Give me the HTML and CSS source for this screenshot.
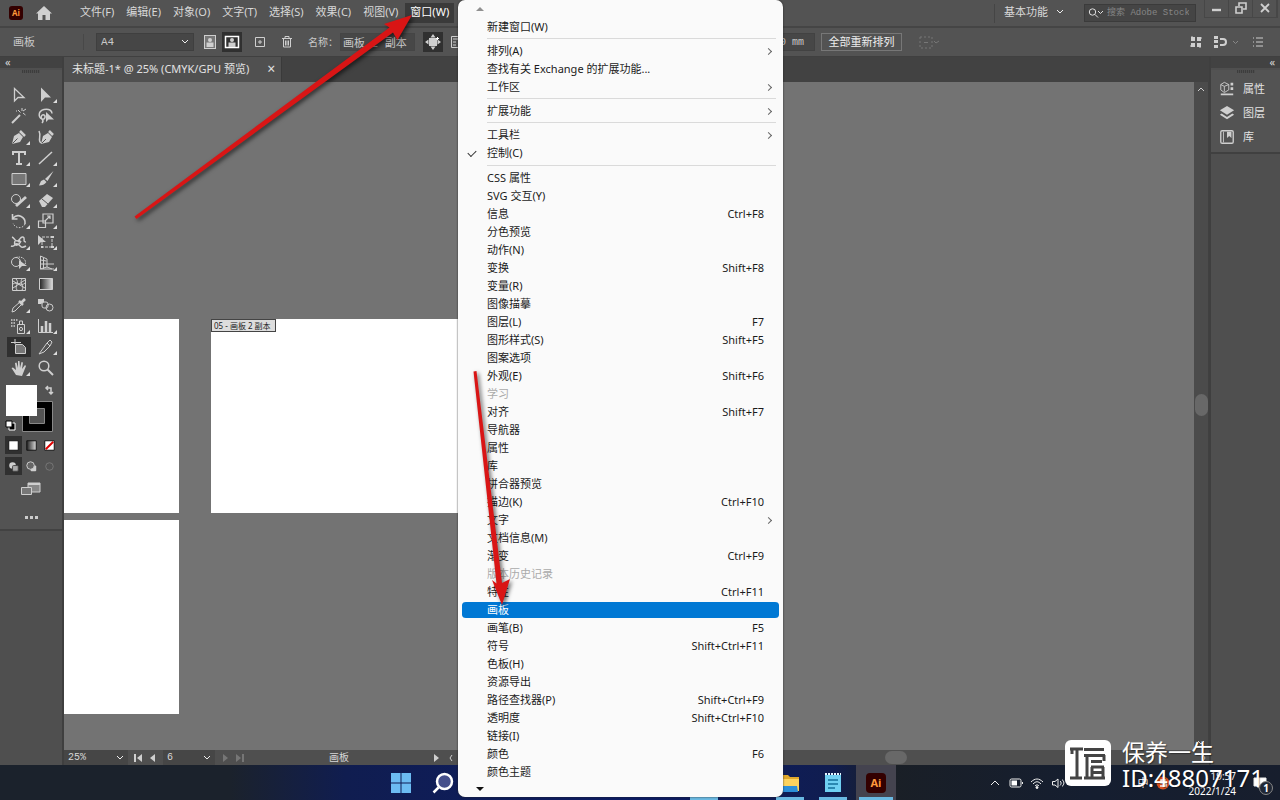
FILE: index.html
```html
<!DOCTYPE html>
<html lang="zh-CN">
<head>
<meta charset="utf-8">
<title>未标题-1* @ 25% (CMYK/GPU 预览)</title>
<link rel="stylesheet" href="styles.css">
</head>
<body>
<div class="app">
  <header class="menubar">
    <svg class="ai-logo" viewBox="0 0 14 14"><rect width="14" height="14" rx="3" fill="#300"/><text x="7" y="10" text-anchor="middle" class="ai-text">Ai</text></svg>
    <svg class="home" viewBox="0 0 18 16"><path d="M9 1 1 8.500h2V15h4.500v-5h3v5H15V8.500h2z" fill="#d0d0d0"/></svg>
    <nav class="menus">
      <button>文件(F)</button><button>编辑(E)</button><button>对象(O)</button><button>文字(T)</button><button>选择(S)</button><button>效果(C)</button><button>视图(V)</button><button class="open">窗口(W)</button>
    </nav>
    <div class="menubar-right">
      <button class="workspace">基本功能 <svg viewBox="0 0 8 6"><path d="m1 1 3 3 3-3"/></svg></button>
      <label class="search">
        <svg viewBox="0 0 16 12"><circle cx="4.500" cy="5" r="3.200"/><path d="m7 7.500 3 3M10 4l2.500 2.500L15 4"/></svg>
        <input type="text" placeholder="搜索 Adobe Stock" aria-label="搜索 Adobe Stock">
      </label>
      <div class="window-buttons">
        <button aria-label="最小化"><svg viewBox="0 0 12 12"><path d="M1 8h9" stroke-width="2.400"/></svg></button>
        <button aria-label="还原"><svg viewBox="0 0 12 12"><path d="M4 4V1h7v6H8M1 5h6v6H1z" stroke-width="1.600"/></svg></button>
        <button aria-label="关闭"><svg viewBox="0 0 12 12"><path d="m2 2 8 8M10 2l-8 8" stroke-width="1.800"/></svg></button>
      </div>
    </div>
  </header>

  <div class="controlbar">
    <div class="control-main">
      <span class="control-title">画板</span>
      <div class="pick preset"><select aria-label="预设"><option>A4</option></select><svg viewBox="0 0 8 6"><path d="m1 1 3 3 3-3"/></svg></div>
      <div class="orient">
        <button aria-label="纵向"><svg viewBox="0 0 18 18"><rect x="3.500" y="2.500" width="11" height="13" fill="#777"/><circle cx="9" cy="7" r="2" class="f"/><path d="M5.500 9.500h7V14h-7z" class="f"/></svg></button>
        <button class="on" aria-label="横向"><svg viewBox="0 0 18 18"><rect x="2.500" y="3.500" width="13" height="11" stroke-width="1.500"/><circle cx="9" cy="7" r="2" class="f"/><path d="M5.500 9.500h7V14h-7z" class="f"/></svg></button>
      </div>
      <button class="icon-button" aria-label="新建画板"><svg viewBox="0 0 18 18"><path d="M4.500 4.500h9v9h-9zM9 7v4M7 9h4"/></svg></button>
      <button class="icon-button trash" aria-label="删除画板"><svg viewBox="0 0 18 18"><path d="M4 5.500h10M7 5V3.500h4V5M5.500 6v8h7V6M7.500 7.500v5M9 7.500v5M10.500 7.500v5"/></svg></button>
      <label class="name-field">名称： <input type="text" value="画板 2 副本 2"></label>
      <button class="icon-button on" aria-label="移动画板内容"><svg viewBox="0 0 18 18"><path d="M5 5h8v8H5zM9 1l2.500 3.500h-5zM9 17l2.500-3.500h-5zM1 9l3.500-2.500v5zM17 9l-3.500-2.500v5z" class="f"/><path d="M13.500 4v3M12 5.500h3"/></svg></button>
      <button class="icon-button list-button" aria-label="画板选项"><svg viewBox="0 0 18 18"><path d="M3.500 3.500h11v11h-11zM5 6h8M5 9h3M5 12h3"/></svg></button>
    </div>
    <input class="unit" type="text" value="0 mm" aria-label="高度">
    <button class="rearrange">全部重新排列</button>
    <svg class="refpoint" viewBox="0 0 22 14"><path d="M2 2h12v11H2z" stroke-dasharray="2 2"/><path d="M6 7.500h4M16 6l2 2 3-2"/></svg>
    <div class="control-right">
      <svg viewBox="0 0 14 14"><path class="f" d="M2 2h4v4H2zM8 2h4v4H8zM2 8h4v4H2zM8 8h4v4H8z"/><path d="M3 1v2M11 11v2M1 11h2M11 3h2"/></svg>
      <svg class="snap" viewBox="0 0 28 14"><path class="f" d="M1 1h4v3H1zM1 5h4v3H1zM1 10h4v3H1z"/><path d="M7 4h3a3 3 0 0 1 0 6H7" stroke-width="2"/><path d="m20 6 2.500 2.500L25 6" stroke="#888"/></svg>
      <svg viewBox="0 0 14 14"><path d="M2 3h1M2 7h1M2 11h1M5 3h7M5 7h7M5 11h7"/></svg>
    </div>
  </div>

  <div class="workspace-row">
    <aside class="tools-dock">
      <div class="dock-head">«</div>
      <div class="tools">
        <div class="grip"></div>
        <div class="tool-grid">
          <button aria-label="选择"><svg viewBox="0 0 18 18"><path d="M4.500 2.500v12.500l3.500-3.500H14z" stroke-width="1.300"/></svg></button>
          <button class="more" aria-label="直接选择"><svg viewBox="0 0 18 18"><path class="f" d="M4 1.500V16l4-4.500h6z"/></svg></button>
          <button aria-label="魔棒"><svg viewBox="0 0 18 18"><path d="m2 16 8-8" stroke-width="2"/><path d="M12 1v3M10.500 5.500 8 3M13 6l2.500 2M13 4l3-2M6 4h1"/></svg></button>
          <button aria-label="套索"><svg viewBox="0 0 18 18"><path d="M5 12C1 10 1 4 7 2.500c5-1 8 1 8 4M5 12c3 1 4-3 2-4s-4 2-2 4 1 3 0 4" stroke-width="1.500"/><path class="f" d="M9 5v10l2.500-2.500H17z"/></svg></button>
          <button class="more" aria-label="钢笔"><svg viewBox="0 0 18 18"><path class="f" d="m2 16 2-8 5-3 4 4-3 5z"/><path d="m10 3 5 5" stroke-width="2.500"/><path d="m2.500 15.500 5-5" stroke="#535353"/></svg></button>
          <button aria-label="曲率"><svg viewBox="0 0 18 18"><path class="f" d="m4 16 2-8 5-3 4 4-3 5z"/><path d="m12 3 4 4" stroke-width="2.500"/><path d="m5 15 4-4" stroke="#535353"/><path d="M4 15C0 12 5 9 2 3" stroke-width="1.500"/></svg></button>
          <button class="more" aria-label="文字"><svg viewBox="0 0 18 18"><path d="M3 6V3h12v3M9 3v12M6 15h6" stroke-width="2"/></svg></button>
          <button class="more" aria-label="直线"><svg viewBox="0 0 18 18"><path d="M2 15 15 3" stroke-width="1.500"/></svg></button>
          <button class="more" aria-label="矩形"><svg viewBox="0 0 18 18"><path d="M2 3.500h14v11H2z" fill="#777"/></svg></button>
          <button class="more" aria-label="画笔"><svg viewBox="0 0 18 18"><path class="f" d="M16.500 1 8 9l2.500 2zM7 9.500 4 11l-2 4.500c3 0 6-1 7.500-3.500z"/></svg></button>
          <button class="more" aria-label="Shaper"><svg viewBox="0 0 18 18"><circle cx="6" cy="8" r="4.500"/><path d="m6 15 10-9" stroke-width="2.800"/></svg></button>
          <button class="more" aria-label="橡皮擦"><svg viewBox="0 0 18 18"><path class="f" d="m2 10 8-7 6 4-8 9H5z"/><path d="m5 8 6 5" stroke="#555"/></svg></button>
          <button class="more" aria-label="旋转"><svg viewBox="0 0 18 18"><path d="M3 6c5-5 13-1 12 6M2.500 2v5h5" stroke-width="1.600"/><path d="M15 12c-2 5-10 5-12-1" stroke-dasharray="1.500 1.500"/></svg></button>
          <button class="more" aria-label="缩放"><svg viewBox="0 0 18 18"><path d="M6 2h10v9H6zM1.500 9h7v6.500h-7zM8 9l5-5M10 4h3v3" stroke-width="1.200"/></svg></button>
          <button class="more" aria-label="宽度"><svg viewBox="0 0 18 18"><path d="M2 4c3 1 2 4 5 4s3-5 6-4-1 5 3 5M1 13c4 2 4-4 7-2s3 5 8 2M5 8c-2 5 3 6 6 0" stroke-width="1.500"/><circle cx="9" cy="8" r="1.500" class="f"/></svg></button>
          <button class="more" aria-label="自由变换"><svg viewBox="0 0 18 18"><path d="M5 4h10v10H5z" stroke-dasharray="3 1"/><path class="f" d="M1 2v10l3-3h5zM14 3h3v2h-3zM14 13h3v2h-3zM4 13h2v2H4z"/></svg></button>
          <button class="more" aria-label="形状生成器"><svg viewBox="0 0 18 18"><circle cx="6" cy="8" r="4.500"/><path d="M6 3.500c7-2 11 3 9 7" stroke-dasharray="1.500 1"/><path class="f" d="M9 6v9l3-3h5z"/></svg></button>
          <button class="more" aria-label="透视网格"><svg viewBox="0 0 18 18"><path d="M3.500 2v13H17M3.500 2 10 5v8M3.500 6l6 1M3.500 10H17M6.500 4v11M10 13l5 2M3 15l7-2"/></svg></button>
          <button aria-label="网格"><svg viewBox="0 0 18 18"><path d="M2.500 3.500h13v12h-13zM3 9c4-3 8 3 12-1M6 4c4 4-2 7 1 11M12 4c-3 4 3 7 0 11M3 6l12 7M3 13l12-8"/></svg></button>
          <button aria-label="渐变"><svg viewBox="0 0 18 18"><defs><linearGradient id="g"><stop stop-color="#222"/><stop offset="1" stop-color="#ddd"/></linearGradient></defs><path d="M2.500 3.500h13v11h-13z" fill="url(#g)"/></svg></button>
          <button class="more" aria-label="吸管"><svg viewBox="0 0 18 18"><path d="m2 16 1-4 7-6 2 2-7 7z"/><path d="m9 5 4 4M11 7l4-4" stroke-width="2.500"/></svg></button>
          <button aria-label="混合"><svg viewBox="0 0 18 18"><path class="f" d="M1 3h6v3L4 8H1z"/><rect x="5" y="6" width="6" height="6" rx="2"/><circle cx="12.500" cy="11.500" r="3.500"/></svg></button>
          <button class="more" aria-label="符号喷枪"><svg viewBox="0 0 18 18"><path d="M7.500 7.500h7v9h-7zM9.500 7V4h3v3"/><circle cx="11" cy="12" r="1.600"/><path d="M1 3h7M1 6h5M1 9h4" stroke-dasharray="1.500 1" stroke-width="1.500"/></svg></button>
          <button class="more" aria-label="图表"><svg viewBox="0 0 18 18"><path d="M1.500 2v13.500H16"/><path d="M5 15V9M9 15V4M13 15V6" stroke-width="2.500"/></svg></button>
          <button class="on" aria-label="画板工具"><svg viewBox="0 0 18 18"><path d="M5 1v5M1 4.500h10"/><path d="M5.500 6.500h7l3 3v6h-10z" fill="#777"/></svg></button>
          <button class="more" aria-label="切片"><svg viewBox="0 0 18 18"><path d="m2 16 8-11 3 3-6 6zM10 5l3-3 2 2-2 4"/></svg></button>
          <button class="more" aria-label="抓手"><svg viewBox="0 0 18 18"><path class="f" d="M6 16 1.500 9l1.500-.5 3 2.500-1-7 1.500-.5L8 9V2h1.500l.5 7 1.500-6 1.500.5-1 6.500 3-4 1 1-4 10z"/></svg></button>
          <button aria-label="缩放工具"><svg viewBox="0 0 18 18"><circle cx="7" cy="7" r="4.800" stroke-width="1.500"/><path d="m10.500 10.500 5.500 5.500" stroke-width="2"/></svg></button>
        </div>
        <svg class="swatches" viewBox="0 0 62 50"><path d="M29.500 23.500h16v16h-16z" stroke="#000" stroke-width="14"/><path d="M22.500 16.500h30v30h-30zM29.500 23.500h15v15h-15z" stroke="#888"/><path d="M30 24h14v14H30z" fill="#535353" stroke="none"/><rect x="6" y="0" width="31" height="31" fill="#fff" stroke="none"/><path d="M46 3h5v6M48 1l-2 2 2 2M49 7l2 2 2-2" stroke-width="1.500"/><path d="M9 38h6v7H9z" fill="#000" stroke="#fff"/><path d="M6 36h6v6H6z" fill="#fff" stroke="#000"/></svg>
        <div class="fill-modes">
          <button class="on" aria-label="颜色"><svg viewBox="0 0 18 18"><path d="M4 4h10v10H4z" fill="#fff" stroke="#111"/></svg></button>
          <button aria-label="渐变填充"><svg viewBox="0 0 18 18"><path d="M4 4h10v10H4z" fill="url(#g)" stroke="#111"/></svg></button>
          <button aria-label="无"><svg viewBox="0 0 18 18"><path d="M4 4h10v10H4z" fill="#fff" stroke="#111"/><path d="m5 13 8-8" stroke="#d00" stroke-width="2"/></svg></button>
        </div>
        <div class="fill-modes">
          <button class="on" aria-label="正常绘图"><svg viewBox="0 0 18 18"><circle cx="8" cy="8" r="3.500" class="f"/><rect x="8" y="8" width="6" height="6" rx="1" fill="#aaa" stroke="#444"/></svg></button>
          <button aria-label="背面绘图"><svg viewBox="0 0 18 18"><rect x="8" y="8" width="6" height="6" rx="1" class="f"/><circle cx="8" cy="8" r="4" fill="#666"/></svg></button>
          <button aria-label="内部绘图"><svg viewBox="0 0 18 18"><circle cx="9" cy="9" r="4" stroke="#777"/></svg></button>
        </div>
        <button class="screen-mode" aria-label="屏幕模式"><svg viewBox="0 0 22 16"><path d="M8 2h12v9H8z" fill="#888"/><path d="M8 2h12v2H8z" class="f"/><path d="M1.500 6.500h10v7h-10z" fill="#777"/></svg></button>
        <button class="dots" aria-label="编辑工具栏"><i></i><i></i><i></i></button>
      </div>
    </aside>

    <main class="document">
      <div class="tabs"><div class="tab">未标题-1* @ 25% (CMYK/GPU 预览)<button aria-label="关闭文档">×</button></div></div>
      <div class="canvas-row">
        <div class="canvas">
          <div class="artboard a1"></div>
          <div class="artboard a2"><span>05 - 画板 2 副本</span></div>
          <div class="artboard a3"></div>
        </div>
        <div class="vscroll"><svg viewBox="0 0 8 6"><path d="m1 5 3-3 3 3"/></svg><div class="vthumb"></div><svg viewBox="0 0 8 6"><path d="m1 1 3 3 3-3"/></svg></div>
      </div>
      <div class="status">
        <div class="pick zoom-level"><select aria-label="缩放级别"><option>25%</option></select><svg viewBox="0 0 8 6"><path d="m1 1 3 3 3-3"/></svg></div>
        <svg viewBox="0 0 10 10"><path class="f" d="M1 1h2v8H1zM9 1v8L4 5z"/></svg>
        <svg viewBox="0 0 10 10"><path class="f" d="M7 1v8L2 5z"/></svg>
        <div class="pick board-no"><select aria-label="画板编号"><option>6</option></select><svg viewBox="0 0 8 6"><path d="m1 1 3 3 3-3"/></svg></div>
        <svg class="off" viewBox="0 0 10 10"><path class="f" d="M3 1v8l5-4z"/></svg>
        <svg class="off" viewBox="0 0 10 10"><path class="f" d="M7 1h2v8H7zM1 1v8l5-4z"/></svg>
        <span class="status-text">画板</span>
        <svg viewBox="0 0 10 10"><path class="f" d="M3 1v8l5-4z"/></svg>
        <svg viewBox="0 0 10 10"><path d="M6 2 4 5l2 3"/></svg>
        <div class="hscroll"><div class="hthumb"></div></div>
        <svg viewBox="0 0 10 10"><path d="m4 2 2 3-2 3"/></svg>
      </div>
    </main>

    <aside class="panels">
      <div class="dock-head right">«</div>
      <div class="panel-list">
        <div class="grip"></div>
        <button><svg viewBox="0 0 18 18"><path d="M2 4l4-2.500L11 4v6l-5 3-4-3zM2 4l4 2 5-2M6 6v6"/><path class="f" d="M13 2h3v3h-3zM13 7h3v3h-3zM2 14h14v2H2z"/></svg>属性</button>
        <button><svg viewBox="0 0 18 18"><path class="f" d="m9 1 8 5-8 5-8-5zM1 11l2-1.500 6 4 6-4 2 1.500-8 5z"/></svg>图层</button>
        <button><svg viewBox="0 0 18 18"><rect x="2" y="2" width="14" height="14" rx="1.500" stroke-width="1.500"/><path d="M5 3v12"/><path class="f" d="M9 3h5v7l-2.500-2L9 10z"/></svg>库</button>
      </div>
    </aside>
  </div>

  <footer class="taskbar">
    <svg class="win" viewBox="0 0 20 20"><path fill="#6cbcf2" d="M0 0h9.500v9.500H0zM10.500 0H20v9.500h-9.500zM0 10.500h9.500V20H0zM10.500 10.500H20V20h-9.500z"/></svg>
    <svg class="find" viewBox="0 0 22 22"><path d="m1.500 20.500 5-5" stroke="#fff" stroke-width="2.500"/><circle cx="12.500" cy="9.500" r="7.500" fill="#46508c" stroke="#fff" stroke-width="2.500"/></svg>
    <div class="apps">
      <div class="app-slot"></div>
      <div class="app-slot idle"></div>
      <div class="app-slot"><svg viewBox="0 0 20 22"><path fill="#e0a82c" d="M1 3h7l2 2h9v14H1z"/><path fill="#fcd35e" d="M1 7h18v12H1z"/><path fill="#2c8fd8" d="M3 14h14l1 6H2z"/></svg></div>
      <div class="app-slot"><svg viewBox="0 0 20 22"><path fill="#6fd0f2" d="M2 3h16v17H2z"/><path d="M2 2h16" stroke="#e5f6ff" stroke-width="2" stroke-dasharray="2 1"/><path d="M5 8h10M5 12h10M5 16h7" stroke="#15709c" stroke-width="1.500"/></svg></div>
      <div class="app-slot current"><svg viewBox="0 0 20 20"><rect width="20" height="20" rx="4" fill="#300"/><text x="10" y="14" text-anchor="middle" class="ai-big">Ai</text></svg></div>
    </div>
    <div class="tray">
      <svg viewBox="0 0 14 14"><path d="m3 9 4-4 4 4"/></svg>
      <svg viewBox="0 0 14 14"><rect x="1" y="3" width="11" height="8" rx="1.500"/><path d="M2.500 4.500H8v5H2.500z" fill="#fff" stroke="none"/><path d="M13.500 6v2"/></svg>
      <svg viewBox="0 0 14 14"><path d="M1 6c4-4 8-4 12 0M3 8c3-3 5-3 8 0M5 10c1-1.500 3-1.500 4 0"/><circle cx="7" cy="11.500" r="1" fill="#fff"/></svg>
      <svg viewBox="0 0 14 14"><path d="M1.500 5.500h2.500L7 3v8.500L4 9H1.500zM9 5c1.500 1 1.500 3 0 4.500M11 3.500c2.500 2 2.500 5 0 7"/></svg>
      <span class="ime">中</span>
      <svg class="sogou" viewBox="0 0 14 14"><circle cx="7" cy="7" r="6.500" fill="#d9501e" stroke="none"/><path d="M10 4H5v3h5v3H4" stroke-width="1.500"/></svg>
      <div class="clock"><span>19:57</span><span>2022/1/24</span></div>
      <div class="notice"><svg viewBox="0 0 14 12"><path d="M1 1h12v8H8l-3 2V9H1z" fill="#fff"/></svg><b>1</b></div>
    </div>
  </footer>
</div>

<div class="dropdown" role="menu">
  <div class="scroll-up"><svg viewBox="0 0 8 6"><path d="m0 5 4-4 4 4z" fill="#909090"/></svg></div>
  <button>新建窗口(W)</button>
  <hr>
  <button class="sub">排列(A)</button>
  <button>查找有关 Exchange 的扩展功能...</button>
  <button class="sub">工作区</button>
  <hr>
  <button class="sub">扩展功能</button>
  <hr>
  <button class="sub">工具栏</button>
  <button class="checked">控制(C)</button>
  <hr class="wide">
  <button>CSS 属性</button>
  <button>SVG 交互(Y)</button>
  <button>信息<kbd>Ctrl+F8</kbd></button>
  <button>分色预览</button>
  <button>动作(N)</button>
  <button>变换<kbd>Shift+F8</kbd></button>
  <button>变量(R)</button>
  <button>图像描摹</button>
  <button>图层(L)<kbd>F7</kbd></button>
  <button>图形样式(S)<kbd>Shift+F5</kbd></button>
  <button>图案选项</button>
  <button>外观(E)<kbd>Shift+F6</kbd></button>
  <button disabled>学习</button>
  <button>对齐<kbd>Shift+F7</kbd></button>
  <button>导航器</button>
  <button>属性</button>
  <button>库</button>
  <button>拼合器预览</button>
  <button>描边(K)<kbd>Ctrl+F10</kbd></button>
  <button class="sub">文字</button>
  <button>文档信息(M)</button>
  <button>渐变<kbd>Ctrl+F9</kbd></button>
  <button disabled>版本历史记录</button>
  <button>特性<kbd>Ctrl+F11</kbd></button>
  <button class="active">画板</button>
  <button>画笔(B)<kbd>F5</kbd></button>
  <button>符号<kbd>Shift+Ctrl+F11</kbd></button>
  <button>色板(H)</button>
  <button>资源导出</button>
  <button>路径查找器(P)<kbd>Shift+Ctrl+F9</kbd></button>
  <button>透明度<kbd>Shift+Ctrl+F10</kbd></button>
  <button>链接(I)</button>
  <button>颜色<kbd>F6</kbd></button>
  <button>颜色主题</button>
  <div class="scroll-down"><svg viewBox="0 0 8 6"><path d="m0 1 4 4 4-4z" fill="#111"/></svg></div>
</div>

<svg class="arrows" viewBox="0 0 520 620">
  <g class="arrow-shape">
    <path d="M134.500 216.500 389.500 27.500 384 24l28-9-14.500 25-4.500-7.500L136.500 219z"/>
    <path d="M473.500 371.500 496.500 583.500 492 580l10 25 8-26-8 4L476.500 371z"/>
  </g>
</svg>

<div class="watermark">
  <svg viewBox="0 0 46 46"><rect width="46" height="46" rx="6" fill="#fff" stroke="none"/><path d="M5 9h13M7 8v6M12 9v29M5 38h12M19 9.500h20M19 15.500h21M22 15v23M39 15v6M26 21.500h11M26 27h13M26 32.500h13M27 27v11M38 27v11M19 38h21" stroke="#444" stroke-width="3"/></svg>
  <div><p>保养一生</p><p class="user-id">ID:48807171</p></div>
</div>
</body>
</html>
```
FILE: styles.css
```css
* { box-sizing: border-box; }
body {
  margin: 0;
  position: relative;
  height: 100vh;
  overflow: hidden;
  background: #535353;
  color: #d8d8d8;
  font: 11px/16px "Noto Sans", "Noto Sans CJK SC", sans-serif;
}
button, input, select { font: inherit; color: inherit; }
button { border: 0; padding: 0; background: none; }
select { appearance: none; }
svg { display: block; flex: none; fill: none; stroke: #cfcfcf; }
.f { fill: #cfcfcf; stroke: none; }

.app { display: flex; flex-direction: column; height: 100%; }

.menubar { display: flex; align-items: center; height: 28px; border-bottom: 2px solid #454545; flex: none; }
.ai-logo { width: 14px; margin-left: 9px; stroke: none; }
.ai-text { font: bold 8px "Open Sans", sans-serif; fill: #ff9a3c; }
.home { width: 18px; margin-left: 12px; stroke: none; }
.menus { display: flex; gap: 2px; margin-left: 22px; }
.menus button { height: 20px; padding: 0 5px 2px; }
.menus .open { background: #3a3a3a; color: #fff; }
.menubar-right { display: flex; align-items: center; height: 100%; margin-left: auto; }
.workspace { display: flex; align-items: center; gap: 8px; padding: 0 0 3px 9px; border-left: 1px solid #454545; margin-right: 20px; }
.workspace svg { width: 8px; stroke: #eee; }
.search { display: flex; align-items: center; width: 112px; height: 18px; padding: 0 3px; background: #454545; border: 1px solid #3b3b3b; margin-right: 8px; }
.search svg { width: 16px; stroke: #e0e0e0; }
.search input { min-width: 0; flex: 1; height: 16px; padding: 0 3px; border: 0; background: none; font: 9px/16px "Liberation Mono", "Noto Sans CJK SC", monospace; }
.search input::placeholder { color: #868686; opacity: 1; }
.window-buttons { display: flex; align-self: flex-start; margin-right: 2px; border: 1px solid #474747; border-top: 0; }
.window-buttons button { width: 24px; height: 17px; padding: 1px 6px 3px; border-right: 1px solid #474747; }
.window-buttons svg { width: 12px; }

.controlbar { display: flex; align-items: center; height: 29px; border-bottom: 1px solid #404040; color: #c8c8c8; flex: none; }
.control-main { display: flex; align-items: center; width: 775px; flex: none; }
.control-title { width: 84px; padding-left: 13px; border-right: 1px solid #484848; }
.pick { position: relative; display: flex; align-items: center; background: #464646; font-family: "Liberation Mono", monospace; }
.pick select { flex: 1; min-width: 0; height: 100%; padding: 0 4px; border: 0; background: none; }
.pick svg { position: absolute; right: 4px; width: 8px; stroke: #eee; pointer-events: none; }
.preset { width: 98px; height: 18px; margin: 0 6px 0 12px; border: 1px solid #3f3f3f; }
.orient { display: flex; gap: 2px; }
.orient button, .icon-button { width: 20px; height: 20px; padding: 1px; }
.controlbar .on, .tool-grid .on, .fill-modes .on { background: #303030; }
.icon-button { margin-left: 8px; }
.trash { margin-left: 7px; }
.control-main .on svg { stroke: #fff; }
.name-field { display: flex; gap: 2px; margin-left: 11px; width: 107px; white-space: nowrap; font-size: 10px; line-height: 18px; }
.name-field input { min-width: 0; flex: 1; height: 18px; padding: 0 2px; border: 1px solid #454545; background: #474747; font: 11px/16px "Liberation Mono", "Noto Sans CJK SC", monospace; }
.list-button { margin-left: 4px; }
.unit { width: 40px; height: 18px; padding: 0 4px; border: 1px solid #424242; background: #474747; font: 10px/16px "Liberation Mono", monospace; }
.rearrange { height: 18px; width: 81px; margin: 0 16px 0 6px; border: 1px solid #777; color: #eee; line-height: 16px; }
.refpoint { width: 22px; stroke: #777; }
.control-right { display: flex; align-items: center; gap: 10px; margin: 0 15px 0 auto; }
.control-right svg { width: 14px; }
.control-right .snap { width: 28px; }

.workspace-row { display: flex; flex: 1; min-height: 0; }
.tools-dock, .panels { flex: none; background: #4f4f4f; border-right: 2px solid #3f3f3f; }
.tools-dock { width: 64px; }
.dock-head { height: 11px; padding-left: 5px; background: #424242; font-size: 11px; line-height: 9px; }
.dock-head.right { padding: 0 5px; text-align: right; }
.tools { padding-bottom: 6px; background: #535353; border-bottom: 2px solid #424242; }
.grip { width: 18px; height: 3px; margin: 2px auto 0; background: repeating-linear-gradient(90deg, #3d3d3d 0 1px, #4d4d4d 1px 2px); }
.tool-grid { display: grid; grid-template-columns: 24px 24px; column-gap: 3px; padding: 12px 0 0 7px; grid-auto-rows: 21px; }
.tool-grid button { position: relative; display: grid; place-items: center; height: 20px; }
.tool-grid svg { width: 18px; }
.more::after { content: ""; position: absolute; right: 1px; bottom: 2px; border: 2px solid transparent; border-right-color: #ddd; border-bottom-color: #ddd; }
.swatches { width: 62px; margin: 6px 0 1px; }
.fill-modes { display: flex; gap: 1px; padding-left: 5px; height: 21px; }
.fill-modes button { width: 17px; height: 18px; }
.screen-mode { display: block; margin: 3px auto 0; }
.screen-mode svg { width: 22px; }
.dots { display: flex; gap: 2px; margin: 14px auto 0; height: 12px; align-items: center; }
.dots i { width: 3px; height: 3px; background: #ccc; }

.document { display: flex; flex: 1; flex-direction: column; min-width: 0; }
.tabs { display: flex; height: 25px; background: #424242; flex: none; }
.tab { display: flex; align-items: center; gap: 18px; padding: 0 6px 2px 8px; background: #505050; border-right: 1px solid #3a3a3a; color: #e2e2e2; }
.tab button { font-size: 14px; }
.canvas-row { display: flex; flex: 1; min-height: 0; }
.canvas { position: relative; flex: 1; background: #737373; overflow: hidden; }
.artboard { position: absolute; background: #fff; height: 194px; }
.a1 { left: 0; top: 237px; width: 115px; }
.a2 { left: 147px; top: 237px; width: 275px; }
.a3 { left: 0; top: 438px; width: 115px; }
.artboard span { display: inline-block; padding: 0 4px 0 2px; border: 1px solid #444; background: #ddd; color: #222; font-size: 8px; line-height: 11px; vertical-align: top; }
.vscroll { display: flex; flex-direction: column; justify-content: space-between; align-items: center; width: 15px; padding: 4px 0; background: #4b4b4b; border-right: 1px solid #404040; }
.vscroll svg { width: 8px; }
.vthumb { width: 13px; height: 22px; margin-bottom: 23px; border-radius: 7px; background: #686868; }
.status { display: flex; align-items: center; gap: 5px; height: 15px; background: #4f4f4f; flex: none; font-size: 10px; line-height: 15px; }
.status svg { width: 10px; }
.status .off { opacity: .3; }
.status .pick { height: 15px; }
.status .pick svg { width: 8px; }
.zoom-level { width: 64px; }
.board-no { width: 52px; }
.status-text { width: 176px; padding-left: 79px; }
.hscroll { flex: 1; display: flex; justify-content: center; padding-left: 136px; }
.hthumb { width: 22px; height: 13px; border-radius: 7px; background: #686868; }

.panels { width: 71px; border-left: 2px solid #3f3f3f; border-right: 0; }
.panel-list { padding-bottom: 3px; background: #535353; border-bottom: 2px solid #404040; }
.panel-list button { display: flex; align-items: center; gap: 8px; height: 24px; padding-left: 8px; color: #e2e2e2; }
.panel-list svg { width: 16px; }
.panel-list .grip { margin-bottom: 4px; }

.taskbar { display: flex; align-items: center; height: 35px; flex: none; background: linear-gradient(90deg, #1b222c 0 18%, #101d50 27%, #0c1c63 50%, #101d50 65%, #1a1f26 69%, #151e30 85%, #171e2d); }
.taskbar > svg { stroke: none; }
.win { width: 20px; margin-left: 391px; }
.find { width: 22px; margin-left: 21px; }
.apps { display: flex; gap: 3px; height: 100%; margin-left: 230px; }
.app-slot { display: grid; place-items: center; width: 40px; background: linear-gradient(#6ab9e2, #6ab9e2) center bottom / 28px 3px no-repeat; }
.idle { background: none; }
.app-slot svg { width: 20px; stroke: none; }
.current { background-color: #44434f; background-size: 34px 3px; }
.ai-big { font: bold 11px "Open Sans", sans-serif; fill: #ff9a3c; }
.tray { display: flex; align-items: center; gap: 7px; height: 100%; margin: 0 7px 0 auto; color: #fff; }
.tray svg { width: 14px; stroke: #eee; }
.ime { margin-left: 66px; }
.clock { display: flex; flex-direction: column; align-items: flex-end; margin-left: 12px; font-size: 10px; line-height: 15px; padding-top: 2px; }
.notice { display: flex; align-items: flex-end; margin-left: 10px; height: 24px; }
.notice svg { align-self: center; }
.notice b { width: 14px; height: 14px; margin-left: -8px; border: 1px solid #888; border-radius: 7px; background: #202735; text-align: center; font-size: 10px; line-height: 12px; }

.dropdown { position: absolute; left: 458px; top: 0; width: 325px; padding: 0 4px; border-radius: 7px; background: #fafafa; color: #1b1b1b; box-shadow: 0 0 2px #222; }
.dropdown button { position: relative; display: flex; justify-content: space-between; align-items: center; width: 100%; height: 18px; padding: 0 15px 0 25px; line-height: 16px; border: 0 solid transparent; border-radius: 4px; background-clip: padding-box; }
.dropdown button:disabled { color: #aaa; }
.dropdown .active { background-color: #0078d4; color: #fff; border-width: 1px 0; }
.dropdown hr { height: 1px; margin: 2px 3px 3px 25px; border: 0; background: #dadada; }
.dropdown .wide { margin-top: 3px; }
.dropdown kbd { font: inherit; }
.sub::after { content: ""; width: 4px; height: 4px; margin-right: -7px; border: solid #666; border-width: 1px 1px 0 0; transform: rotate(45deg); }
.checked::before { content: ""; position: absolute; left: 6px; top: 6px; width: 7px; height: 4px; border: solid #333; border-width: 0 0 1px 1px; transform: rotate(-45deg); }
.scroll-up, .scroll-down { display: flex; padding-left: 14px; align-items: center; height: 17px; }
.scroll-down { height: 16px; }
.scroll-up svg, .scroll-down svg { width: 8px; stroke: none; }
.scroll-up + button { height: 19px; }

.arrows { position: absolute; left: 0; top: 0; width: 520px; height: 620px; pointer-events: none; stroke: none; }
.arrow-shape { fill: #d91515; filter: drop-shadow(2px 2px 2px #0009); }

.watermark { position: absolute; right: 16px; bottom: 10px; display: flex; align-items: center; gap: 11px; color: #fff; }
.watermark > svg { width: 46px; margin-bottom: 4px; }
.watermark p { margin: 0; font-size: 23px; line-height: 25px; text-shadow: 1px 1px 1px #0006; }
.watermark .user-id { font-size: 24px; }
.watermark div { width: 142px; }
```
